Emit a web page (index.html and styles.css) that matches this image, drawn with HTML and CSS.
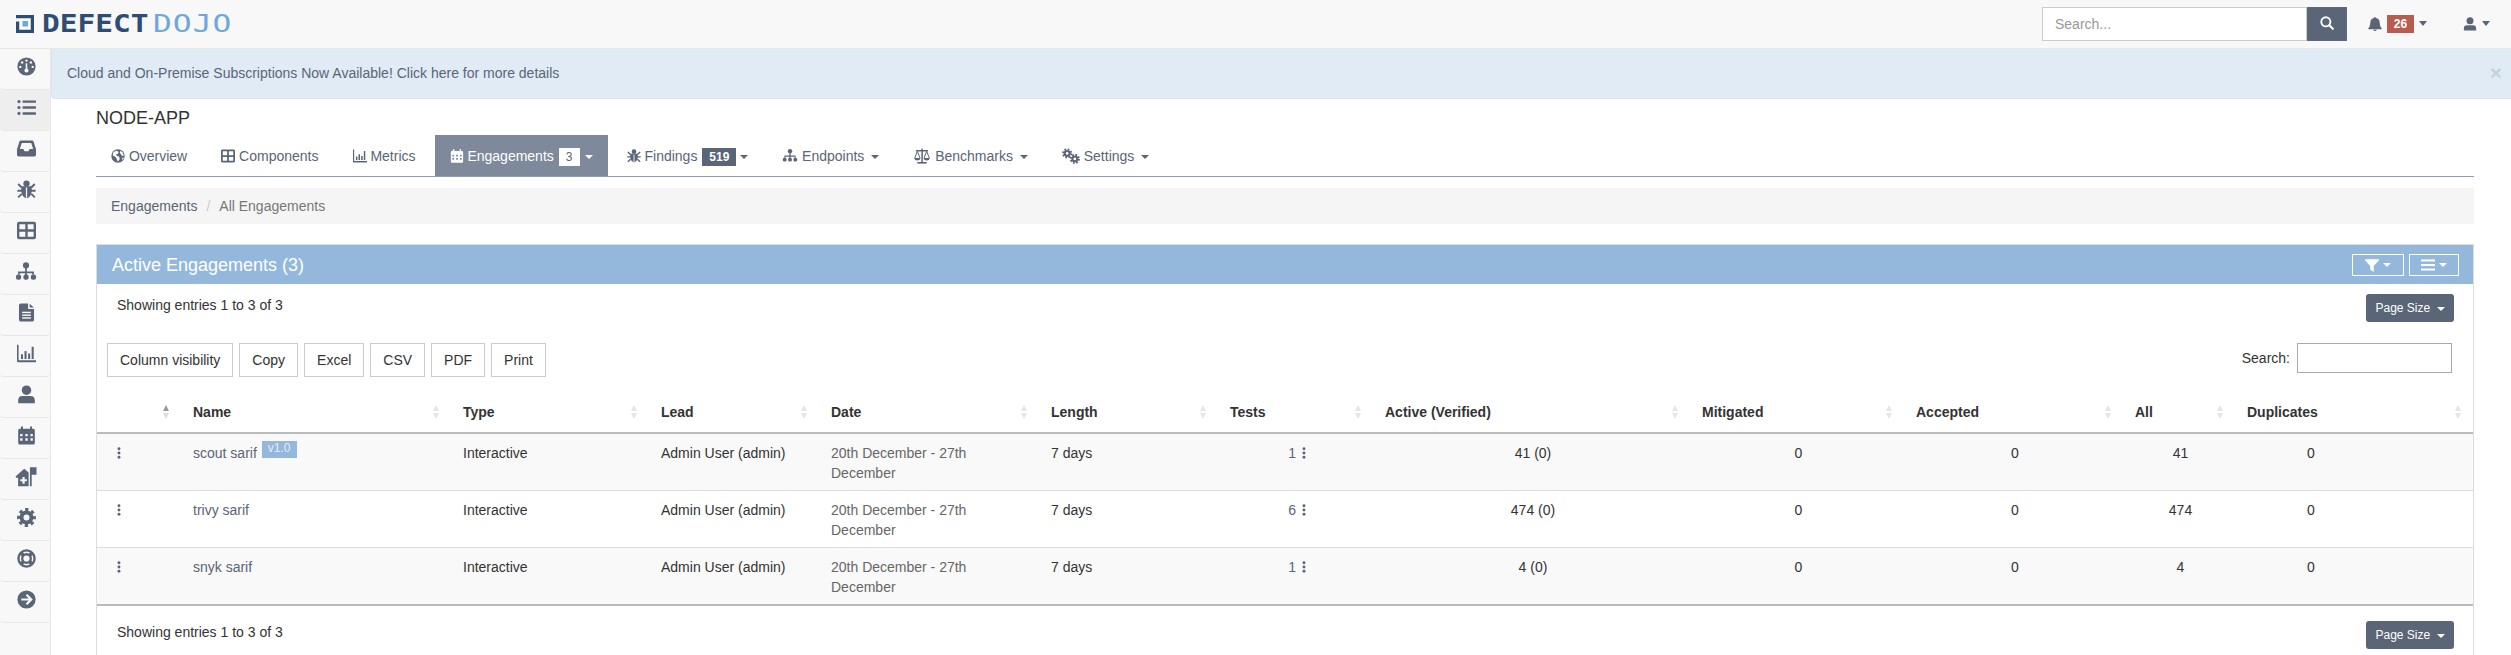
FILE: index.html
```html
<!DOCTYPE html>
<html lang="en">
<head>
    <meta charset="UTF-8">
    <meta name="viewport" content="width=device-width, initial-scale=1.0">
    <title>NODE-APP Engagements</title>
    <link rel="stylesheet" href="styles.css">
</head>
<body>

<svg class="sprite" xmlns="http://www.w3.org/2000/svg">
    <symbol id="i-gauge" viewBox="0 0 24 24">
        <circle cx="12" cy="12" r="11.5" fill="currentColor"/>
        <g fill="#f8f8f8"><circle cx="12" cy="4.5" r="1.5"/><circle cx="6.5" cy="7" r="1.5"/><circle cx="17.500" cy="7" r="1.5"/><circle cx="4.200" cy="12.500" r="1.5"/><circle cx="19.800" cy="12.500" r="1.500"/><circle cx="12" cy="17" r="2.600"/><rect x="11" y="8" width="2" height="9"/></g>
    </symbol>
    <symbol id="i-list" viewBox="0 0 24 24">
        <g fill="currentColor"><circle cx="2.500" cy="4.500" r="2"/><circle cx="2.500" cy="12" r="2"/><circle cx="2.500" cy="19.500" r="2"/><rect x="7" y="3" width="17" height="3" rx=".6"/><rect x="7" y="10.500" width="17" height="3" rx=".6"/><rect x="7" y="18" width="17" height="3" rx=".6"/></g>
    </symbol>
    <symbol id="i-inbox" viewBox="0 0 24 24">
        <path fill="currentColor" fill-rule="evenodd" d="M5 2h14q1.500 0 2 1.500l3 9.500v7q0 2-2 2H2q-2 0-2-2v-7l3-9.500Q3.500 2 5 2zM6 5 3.600 12.500H8l1.500 3h5l1.500-3h4.400L18 5z"/>
    </symbol>
    <symbol id="i-bug" viewBox="0 0 24 24">
        <g fill="currentColor"><circle cx="12" cy="4.500" r="4"/><path d="M6 8h12q1.500 4 0 9-1.500 5-6 6-4.500-1-6-6-1.500-5 0-9z"/></g>
        <rect x="11.200" y="9.500" width="1.600" height="13" fill="#f8f8f8"/>
        <path stroke="currentColor" stroke-width="2.400" fill="none" d="M1.500 5 6 9.500M22.500 5 18 9.500M.5 13.500h6M23.500 13.500h-6M1.500 22 6 17.500M22.500 22 18 17.500"/>
    </symbol>
    <symbol id="i-table" viewBox="0 0 24 24">
        <path fill="none" stroke="currentColor" stroke-width="3" d="M2.500 2.500h19q1 0 1 1v17q0 1-1 1h-19q-1 0-1-1v-17q0-1 1-1zM12 2.500v19M1.500 12h21"/>
    </symbol>
    <symbol id="i-sitemap" viewBox="0 0 24 24">
        <g fill="currentColor"><circle cx="12" cy="5" r="3.500"/><rect x="11" y="8" width="2" height="8"/><path d="M3 15.500V12h18v3.500h-2v-1.600H5v1.600z"/><rect x=".5" y="15.500" width="6" height="6" rx="2.400"/><rect x="9" y="15.500" width="6" height="6" rx="2.400"/><rect x="17.500" y="15.500" width="6" height="6" rx="2.400"/></g>
    </symbol>
    <symbol id="i-file" viewBox="0 0 24 24">
        <path fill="currentColor" d="M5 .5h9v7h7.500V21q0 2.500-2.500 2.500H5Q2.500 23.500 2.500 21V3Q2.500.5 5 .5zM16 .8l5.300 5H16z"/>
        <g fill="#f8f8f8"><rect x="6.500" y="11" width="11" height="1.800"/><rect x="6.500" y="14.500" width="11" height="1.800"/><rect x="6.500" y="18" width="11" height="1.800"/></g>
    </symbol>
    <symbol id="i-chart" viewBox="0 0 24 24">
        <g fill="currentColor"><path d="M0 1h2v19.500h22V23H1.500Q0 23 0 21.500z"/><rect x="5" y="13" width="2.600" height="6"/><rect x="9.500" y="9" width="2.600" height="10"/><rect x="14" y="12" width="2.600" height="7"/><rect x="18.500" y="3.500" width="2.600" height="15.500"/></g>
    </symbol>
    <symbol id="i-user" viewBox="0 0 24 24">
        <g fill="currentColor"><circle cx="12" cy="6.500" r="6"/><path d="M1.500 23v-3.500Q1.500 14 7 14h10q5.500 0 5.500 5.500V23z"/></g>
    </symbol>
    <symbol id="i-cal" viewBox="0 0 24 24">
        <path fill="currentColor" fill-rule="evenodd" d="M5 .5h2.500v3h9v-3H19v3h1.500q2 0 2 2v16q0 2-2 2h-17q-2 0-2-2v-16q0-2 2-2H5zM4 10v3h3v-3zm6.500 0v3h3v-3zM17 10v3h3v-3zM4 15.500v3h3v-3zm6.500 0v3h3v-3zm6.500 0v3h3v-3z"/>
    </symbol>
    <symbol id="i-house" viewBox="0 0 24 24">
        <path fill="currentColor" fill-rule="evenodd" d="M0 12 10 3l5 4.500V23H3v-9.500H.8zM8 12.500v2.700H5.500v2.300H8v2.700h2.500v-2.700H13v-2.300h-2.500v-2.700z"/>
        <path fill="currentColor" d="M16.500 1.500h2V23h-2zM18.500 1.500H24V10h-5.500z"/>
    </symbol>
    <symbol id="i-cog" viewBox="0 0 24 24">
        <circle cx="12" cy="12" r="6.300" fill="none" stroke="currentColor" stroke-width="5"/>
        <circle cx="12" cy="12" r="9.700" fill="none" stroke="currentColor" stroke-width="4.400" stroke-dasharray="4 3.620" stroke-dashoffset="2"/>
    </symbol>
    <symbol id="i-ring" viewBox="0 0 24 24">
        <g fill="none" stroke="currentColor"><circle cx="12" cy="12" r="10.200" stroke-width="3"/><circle cx="12" cy="12" r="5.400" stroke-width="3"/><path stroke-width="4.600" d="M4.800 4.800l3.400 3.400M19.200 4.800l-3.400 3.400M4.800 19.200l3.400-3.400M19.200 19.200l-3.400-3.400"/></g>
    </symbol>
    <symbol id="i-go" viewBox="0 0 24 24">
        <circle cx="12" cy="12" r="11.500" fill="currentColor"/>
        <path fill="none" stroke="#f8f8f8" stroke-width="2.800" d="M5.500 12h12M12 6l6 6-6 6"/>
    </symbol>
    <symbol id="i-globe" viewBox="0 0 24 24">
        <circle cx="12" cy="12" r="11.500" fill="currentColor"/>
        <path fill="#fff" d="M5 4.500 10 3l3 2-1 3-3 1 1 3 4 1 1 4-3 5-2-4-1-3-4-3-2-1q0-5 3-7.500zM16 3l4 3 2 5-3 1-2-3-2-2zM20 14l2 1-2 4-1-2z"/>
    </symbol>
    <symbol id="i-scale" viewBox="0 0 24 24">
        <g fill="currentColor"><rect x="11" y="1" width="2.200" height="20"/><rect x="5" y="21" width="14" height="2.400"/><rect x="3" y="3" width="18" height="2.200"/><path d="M.2 15h9.600q-.8 3.800-4.800 3.800T.2 15zM14.200 15h9.600q-.8 3.800-4.800 3.800T14.200 15z"/></g>
        <path fill="none" stroke="currentColor" stroke-width="1.500" d="M1 15l4-10 4 10M15 15l4-10 4 10"/>
    </symbol>
    <symbol id="i-cogs" viewBox="0 0 28 24">
        <g fill="none" stroke="currentColor"><circle cx="8" cy="8" r="3.800" stroke-width="3.200"/><circle cx="8" cy="8" r="6.400" stroke-width="3" stroke-dasharray="2.600 2.430"/><circle cx="20" cy="16.500" r="3.800" stroke-width="3.200"/><circle cx="20" cy="16.500" r="6.400" stroke-width="3" stroke-dasharray="2.600 2.430"/></g>
    </symbol>
    <symbol id="i-search" viewBox="0 0 24 24">
        <circle cx="10" cy="10" r="7.800" fill="none" stroke="currentColor" stroke-width="3.200"/>
        <path stroke="currentColor" stroke-width="3.600" stroke-linecap="round" d="M16 16l6 6"/>
    </symbol>
    <symbol id="i-bell" viewBox="0 0 24 24">
        <path fill="currentColor" d="M12 0q1.500 0 1.500 1.800 6.500 1 6.500 8 0 6.500 3.500 9.700V21H.5v-1.500Q4 16.300 4 9.800q0-7 6.500-8Q10.500 0 12 0zM9 22h6q-.5 2-3 2t-3-2z"/>
    </symbol>
    <symbol id="i-filter" viewBox="0 0 24 24">
        <path fill="currentColor" d="M0 2h24v2l-9 9.500V24l-6-4v-6.500L0 4z"/>
    </symbol>
    <symbol id="i-bars" viewBox="0 0 24 24">
        <g fill="currentColor"><rect x="0" y="2.500" width="24" height="3.400"/><rect x="0" y="10.300" width="24" height="3.400"/><rect x="0" y="18.100" width="24" height="3.400"/></g>
    </symbol>
    <symbol id="i-dots" viewBox="0 0 4 14">
        <g fill="currentColor"><circle cx="2" cy="2" r="1.700"/><circle cx="2" cy="7" r="1.700"/><circle cx="2" cy="12" r="1.700"/></g>
    </symbol>
</svg>

<header class="topbar">
    <a class="brand">
        <svg class="brand-mark" viewBox="0 0 18 18"><path fill="#2f4d74" d="M0 0h18v18H0V6.500h3.200v8.300h11.600V3.200H0z"/><rect x="6.500" y="6" width="5.500" height="5.500" fill="#6fa8dc"/></svg>
        <span class="brand-dark">DEFECT</span><span class="brand-light">DOJO</span>
    </a>
    <form class="top-search">
        <input type="text" placeholder="Search...">
        <button type="button"><svg class="ic14"><use href="#i-search"/></svg></button>
    </form>
    <div class="top-alerts">
        <svg class="ic14"><use href="#i-bell"/></svg>
        <span class="count">26</span>
        <span class="caret caret-big"></span>
    </div>
    <div class="top-user">
        <svg class="ic14"><use href="#i-user"/></svg>
        <span class="caret caret-big"></span>
    </div>
</header>

<div class="layout">
    <aside class="sidebar">
        <a class="side-item"><svg><use href="#i-gauge"/></svg></a>
        <a class="side-item active"><svg><use href="#i-list"/></svg></a>
        <a class="side-item"><svg><use href="#i-inbox"/></svg></a>
        <a class="side-item"><svg><use href="#i-bug"/></svg></a>
        <a class="side-item"><svg><use href="#i-table"/></svg></a>
        <a class="side-item side-wide"><svg><use href="#i-sitemap"/></svg></a>
        <a class="side-item"><svg><use href="#i-file"/></svg></a>
        <a class="side-item"><svg><use href="#i-chart"/></svg></a>
        <a class="side-item"><svg><use href="#i-user"/></svg></a>
        <a class="side-item"><svg><use href="#i-cal"/></svg></a>
        <a class="side-item side-wide"><svg><use href="#i-house"/></svg></a>
        <a class="side-item"><svg><use href="#i-cog"/></svg></a>
        <a class="side-item"><svg><use href="#i-ring"/></svg></a>
        <a class="side-item"><svg><use href="#i-go"/></svg></a>
    </aside>

    <main class="main">
        <div class="banner">
            <span>Cloud and On-Premise Subscriptions Now Available! Click here for more details</span>
            <span class="banner-close">×</span>
        </div>

        <div class="content">
            <h3 class="product-name">NODE-APP</h3>

            <ul class="tabs">
                <li><a><svg class="ic14"><use href="#i-globe"/></svg> Overview</a></li>
                <li><a><svg class="ic14"><use href="#i-table"/></svg> Components</a></li>
                <li><a><svg class="ic14"><use href="#i-chart"/></svg> Metrics</a></li>
                <li class="active"><a><svg class="ic14"><use href="#i-cal"/></svg> Engagements <span class="tab-badge">3</span> <span class="caret caret-tight"></span></a></li>
                <li><a><svg class="ic14"><use href="#i-bug"/></svg> Findings <span class="tab-badge">519</span> <span class="caret caret-tight"></span></a></li>
                <li><a><svg class="ic16"><use href="#i-sitemap"/></svg> Endpoints <span class="caret"></span></a></li>
                <li><a><svg class="ic18"><use href="#i-scale"/></svg> Benchmarks <span class="caret"></span></a></li>
                <li><a><svg class="ic18"><use href="#i-cogs"/></svg> Settings <span class="caret"></span></a></li>
            </ul>

            <div class="crumbs">
                <a>Engagements</a><span class="crumb-sep">/</span><span class="crumb-now">All Engagements</span>
            </div>

            <section class="panel">
                <div class="panel-head">
                    <h4>Active Engagements (3)</h4>
                    <div class="head-btns">
                        <button class="head-btn"><svg class="ic14"><use href="#i-filter"/></svg><span class="caret"></span></button>
                        <button class="head-btn"><svg class="ic14"><use href="#i-bars"/></svg><span class="caret"></span></button>
                    </div>
                </div>

                <div class="list-info">
                    <span>Showing entries 1 to 3 of 3</span>
                    <button class="page-size">Page Size <span class="caret"></span></button>
                </div>

                <div class="tools">
                    <div class="export-btns">
                        <button>Column visibility</button>
                        <button>Copy</button>
                        <button>Excel</button>
                        <button>CSV</button>
                        <button>PDF</button>
                        <button>Print</button>
                    </div>
                    <label class="table-search">Search: <input type="text"></label>
                </div>

                <table class="grid">
                    <colgroup>
                        <col class="c-menu"><col class="c-name"><col class="c-type"><col class="c-lead"><col class="c-date"><col class="c-length"><col class="c-tests"><col class="c-active"><col class="c-mit"><col class="c-acc"><col class="c-all"><col class="c-dup">
                    </colgroup>
                    <thead>
                        <tr>
                            <th><div class="th-in"><span></span><span class="sort sort-asc"></span></div></th>
                            <th><div class="th-in">Name<span class="sort"></span></div></th>
                            <th><div class="th-in">Type<span class="sort"></span></div></th>
                            <th><div class="th-in">Lead<span class="sort"></span></div></th>
                            <th><div class="th-in">Date<span class="sort"></span></div></th>
                            <th><div class="th-in">Length<span class="sort"></span></div></th>
                            <th><div class="th-in">Tests<span class="sort"></span></div></th>
                            <th><div class="th-in">Active (Verified)<span class="sort"></span></div></th>
                            <th><div class="th-in">Mitigated<span class="sort"></span></div></th>
                            <th><div class="th-in">Accepted<span class="sort"></span></div></th>
                            <th><div class="th-in">All<span class="sort"></span></div></th>
                            <th class="th-last"><div class="th-in">Duplicates<span class="sort"></span></div></th>
                        </tr>
                    </thead>
                    <tbody>
                        <tr>
                            <td><svg class="dots"><use href="#i-dots"/></svg></td>
                            <td><a class="link">scout sarif</a><span class="tag">v1.0</span></td>
                            <td>Interactive</td>
                            <td>Admin User (admin)</td>
                            <td class="muted">20th December - 27th December</td>
                            <td>7 days</td>
                            <td class="num"><a class="link">1</a> <svg class="dots"><use href="#i-dots"/></svg></td>
                            <td class="num">41 (0)</td>
                            <td class="num">0</td>
                            <td class="num">0</td>
                            <td class="num">41</td>
                            <td class="dup">0</td>
                        </tr>
                        <tr>
                            <td><svg class="dots"><use href="#i-dots"/></svg></td>
                            <td><a class="link">trivy sarif</a></td>
                            <td>Interactive</td>
                            <td>Admin User (admin)</td>
                            <td class="muted">20th December - 27th December</td>
                            <td>7 days</td>
                            <td class="num"><a class="link">6</a> <svg class="dots"><use href="#i-dots"/></svg></td>
                            <td class="num">474 (0)</td>
                            <td class="num">0</td>
                            <td class="num">0</td>
                            <td class="num">474</td>
                            <td class="dup">0</td>
                        </tr>
                        <tr>
                            <td><svg class="dots"><use href="#i-dots"/></svg></td>
                            <td><a class="link">snyk sarif</a></td>
                            <td>Interactive</td>
                            <td>Admin User (admin)</td>
                            <td class="muted">20th December - 27th December</td>
                            <td>7 days</td>
                            <td class="num"><a class="link">1</a> <svg class="dots"><use href="#i-dots"/></svg></td>
                            <td class="num">4 (0)</td>
                            <td class="num">0</td>
                            <td class="num">0</td>
                            <td class="num">4</td>
                            <td class="dup">0</td>
                        </tr>
                    </tbody>
                </table>

                <div class="list-info list-info-bottom">
                    <span>Showing entries 1 to 3 of 3</span>
                    <button class="page-size">Page Size <span class="caret"></span></button>
                </div>
            </section>
        </div>
    </main>
</div>

</body>
</html>
```

FILE: styles.css
```css
* { box-sizing: border-box; }
html, body { height: 655px; overflow: hidden; }
body { margin: 0; font-family: "Liberation Sans", Arial, sans-serif; font-size: 14px; line-height: 20px; color: #333; background: #fff; }
svg { display: inline-block; vertical-align: -2px; }
.sprite { display: none; }
.ic14 { width: 14px; height: 14px; }
.ic16 { width: 16px; height: 15px; vertical-align: -2px; }
.ic18 { width: 18px; height: 16px; vertical-align: -3px; }

.caret { display: inline-block; width: 0; height: 0; vertical-align: middle; border-top: 4px solid; border-left: 4px solid transparent; border-right: 4px solid transparent; }
.caret-big { border-top-width: 5px; border-left-width: 4.5px; border-right-width: 4.5px; }

/* top bar */
.topbar { display: flex; align-items: center; height: 49px; padding: 0 21px 1px 16px; background: #f8f8f8; border-bottom: 1px solid #e7e7e7; color: #5a6577; }
.brand { display: flex; align-items: center; height: 18px; margin-right: auto; font-family: "DejaVu Sans Mono", monospace; font-size: 25px; line-height: 18px; }
.brand-mark { width: 18px; height: 18px; margin-right: 8px; }
.brand-dark { display: inline-block; width: 106px; color: #2f4d74; font-weight: bold; transform: scaleX(1.18); transform-origin: left; }
.brand-light { display: inline-block; margin-left: 5px; color: #6fa8dc; letter-spacing: .8px; transform: scaleX(1.25); transform-origin: left; }
.top-search { display: flex; height: 34px; margin-right: 21px; }
.top-search input { width: 265px; height: 34px; padding: 6px 12px; font: 14px "Liberation Sans", Arial, sans-serif; border: 1px solid #ccc; background: #fff; outline: none; }
.top-search input::placeholder { color: #999; }
.top-search button { width: 40px; height: 34px; padding: 0; border: 1px solid #5a6a85; background: #5a6577; color: #fff; }
.top-alerts { display: flex; align-items: center; gap: 5px; margin-right: 36px; }
.count { width: 27px; height: 18px; font-size: 12px; font-weight: bold; line-height: 18px; text-align: center; color: #fff; background: #b85c50; }
.top-user { display: flex; align-items: center; gap: 5px; }

/* sidebar */
.layout { display: flex; }
.sidebar { flex: none; width: 51px; height: 606px; background: #f8f8f8; border-right: 1px solid #e7e7e7; }
.side-item { display: flex; align-items: center; justify-content: center; height: 41px; padding: 0 0 5px 2px; color: #5a6577; border-bottom: 1px solid #e7e7e7; border-radius: 0 0 4px 4px; }
.side-item.active { background: #eee; }
.side-item svg { width: 19px; height: 19px; }
.side-item.side-wide svg { width: 22px; height: 21px; }

.main { flex: 1; min-width: 0; }

.banner { display: flex; justify-content: space-between; height: 50px; padding: 14px 9px 0 15px; color: #5a6577; background: #e1ebf5; border: 1px solid #d9e6f2; border-width: 0 0 1px 1px; border-radius: 0 0 0 4px; }
.banner-close { font-size: 21px; font-weight: bold; color: #c4d1de; }

.content { padding-right: 37px; padding-left: 45px; }
.product-name { margin: 0; padding: 9px 0 7px; font-size: 18px; font-weight: 500; line-height: 20px; }

/* tabs */
.tabs { display: flex; margin: 0 0 11px; padding: 0; list-style: none; border-bottom: 1px solid #8c9eb5; height: 42px; }
.tabs li { margin-right: 4px; }
.tabs a { display: block; height: 41px; padding: 11px 15px 10px; color: #5a6577; white-space: nowrap; }
.tabs .active a { background: #7e8a9b; color: #fff; }
.tabs .caret { margin-left: 3px; }
.tabs .caret-tight { margin-left: 0; }
.tabs .active .caret { margin-left: 1px; }
.tab-badge { display: inline-block; min-width: 21px; height: 18px; margin: 0 0 0 1px; padding: 0 7px; font-size: 12px; font-weight: bold; line-height: 18px; text-align: center; color: #fff; background: #5a6577; vertical-align: 0; }
.tabs .active .tab-badge { color: #5a6577; background: #fff; font-weight: normal; }

.crumbs { height: 36px; margin-bottom: 20px; padding: 8px 15px; color: #777; background: #f5f5f5; }
.crumbs a { color: #5a6577; }
.crumb-sep { padding: 0 9px; color: #ccc; }

/* panel */
.panel { border: 1px solid #ddd; border-bottom: 0; }
.panel-head { display: flex; align-items: center; justify-content: space-between; height: 39px; padding: 0 14px 0 15px; color: #fff; background: #94b8dc; }
.panel-head h4 { margin: 0; font-size: 18px; font-weight: 500; line-height: 20px; }
.head-btns { display: flex; gap: 5px; }
.head-btn { display: flex; align-items: center; justify-content: center; gap: 4px; width: 52px; height: 22px; padding: 0; color: #fff; background: transparent; border: 1px solid #fff; }
.head-btn + .head-btn { width: 50px; }

.list-info { display: flex; align-items: flex-start; justify-content: space-between; height: 59px; padding: 11px 19px 0 20px; }
.page-size { width: 88px; height: 28px; padding: 0; font: 12px "Liberation Sans", Arial, sans-serif; color: #fff; background: #5a6577; border: 0; border-radius: 3px; margin-top: -1px; }
.page-size .caret { margin-left: 3px; }
.list-info-bottom { height: 50px; padding-top: 16px; }

.tools { display: flex; justify-content: space-between; align-items: flex-start; height: 49px; padding: 0 21px 0 10px; }
.export-btns { display: flex; gap: 6px; }
.export-btns button { height: 34px; padding: 0 12px; font: 14px "Liberation Sans", Arial, sans-serif; color: #333; background: #fff; border: 1px solid #ccc; }
.table-search { display: flex; align-items: center; gap: 7px; height: 30px; }
.table-search input { width: 155px; height: 30px; border: 1px solid #aaa; }

/* table */
.grid { width: 2376px; table-layout: fixed; border-collapse: separate; border-spacing: 0; }
.c-menu { width: 78px; } .c-name { width: 270px; } .c-type { width: 198px; } .c-lead { width: 170px; }
.c-date { width: 220px; } .c-length { width: 179px; } .c-tests { width: 155px; } .c-active { width: 317px; }
.c-mit { width: 214px; } .c-acc { width: 219px; } .c-all { width: 112px; } .c-dup { width: 244px; }
.grid th { height: 42px; padding: 0 5px 0 18px; font-weight: bold; text-align: left; border-bottom: 2px solid #bbb; }
.grid .th-last { padding-right: 11px; }
.th-in { display: flex; align-items: center; justify-content: space-between; }
.sort { display: flex; flex-direction: column; gap: 2px; width: 7px; }
.sort::before, .sort::after { content: ""; width: 0; height: 0; border-left: 3.5px solid transparent; border-right: 3.5px solid transparent; }
.sort::before { border-bottom: 6px solid #e6e6e6; }
.sort::after { border-top: 6px solid #e6e6e6; }
.sort-asc::before { border-bottom-color: #999; }
.sort-asc::after { border-top-color: #ddd; }
.grid td { height: 57px; padding: 9px 8px 7px 18px; vertical-align: top; border-bottom: 1px solid #ddd; }
.grid tbody tr:nth-child(odd) td { background: #f9f9f9; }
.grid tbody tr:last-child td { border-bottom: 2px solid #bbb; }
.grid .muted { color: #666; padding-right: 30px; }
.grid .num { padding-left: 23px; text-align: center; }
.grid .dup { padding-left: 78px; }
.link { color: #5a6577; }
.dots { width: 4px; height: 12px; vertical-align: -1px; color: #5a6577; margin-left: 2px; }
.tag { display: inline-block; height: 17px; margin: -2px 0 0 5px; padding: 0 6px; font-size: 12px; line-height: 15px; color: #e4ecf5; background: #94b8dc; vertical-align: top; }
```
